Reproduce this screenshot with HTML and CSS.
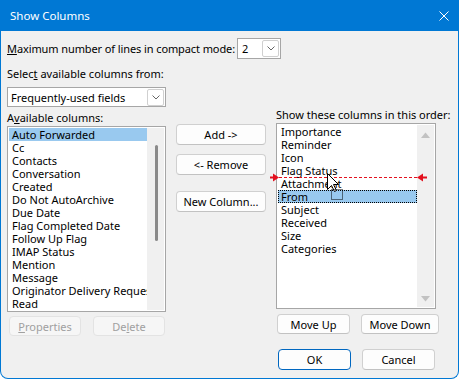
FILE: index.html
```html
<!DOCTYPE html>
<html>
<head>
<meta charset="utf-8">
<title>Show Columns</title>
<link rel="stylesheet" href="styles.css">
</head>
<body>
<div class="window">
  <div class="titlebar">
    <span class="title">Show Columns</span>
    <svg class="close" width="10" height="10" viewBox="0 0 10 10"><path d="M0.5 0.5 L9.5 9.5 M9.5 0.5 L0.5 9.5" stroke="#fff" stroke-width="1" fill="none"/></svg>
  </div>
  <div class="content">
    <div class="row-lines">
      <span class="lbl lbl-lines"><u>M</u>aximum number of lines in compact mode:</span>
      <div class="combo combo-small">
        <span class="combo-text">2</span>
        <span class="drop"><svg width="8" height="5" viewBox="0 0 8 5"><path d="M0.5 0.5 L4 4 L7.5 0.5" stroke="#666" stroke-width="1" fill="none"/></svg></span>
      </div>
    </div>
    <div class="lbl lbl-select">Selec<u>t</u> available columns from:</div>
    <div class="combo combo-wide">
      <span class="combo-text">Frequently-used fields</span>
      <span class="drop"><svg width="8" height="5" viewBox="0 0 8 5"><path d="M0.5 0.5 L4 4 L7.5 0.5" stroke="#666" stroke-width="1" fill="none"/></svg></span>
    </div>
    <div class="columns">
      <div class="col-left">
        <div class="lbl">A<u>v</u>ailable columns:</div>
        <div class="listbox">
          <ul class="items">
            <li class="sel">Auto Forwarded</li>
            <li>Cc</li>
            <li>Contacts</li>
            <li>Conversation</li>
            <li>Created</li>
            <li>Do Not AutoArchive</li>
            <li>Due Date</li>
            <li>Flag Completed Date</li>
            <li>Follow Up Flag</li>
            <li>IMAP Status</li>
            <li>Mention</li>
            <li>Message</li>
            <li>Originator Delivery Requested</li>
            <li>Read</li>
          </ul>
          <div class="vscroll"><div class="thumb"></div></div>
        </div>
        <div class="btn-row left-btns">
          <button class="btn btn-disabled btn-prop" disabled><u>P</u>roperties</button>
          <button class="btn btn-disabled btn-del" disabled>De<u>l</u>ete</button>
        </div>
      </div>
      <div class="col-mid">
        <button class="btn btn-mid">Add -&gt;</button>
        <button class="btn btn-mid btn-remove">&lt;- Remove</button>
        <button class="btn btn-mid btn-new">New Column...</button>
      </div>
      <div class="col-right">
        <div class="lbl">Show these columns in this order:</div>
        <div class="listbox listbox-right">
          <ul class="items">
            <li>Importance</li>
            <li>Reminder</li>
            <li>Icon</li>
            <li>Flag Status</li>
            <li>Attachment</li>
            <li class="sel focus">From</li>
            <li>Subject</li>
            <li>Received</li>
            <li>Size</li>
            <li>Categories</li>
          </ul>
          <div class="vscroll vscroll-arrows">
            <svg class="arr" width="9" height="6" viewBox="0 0 9 6"><path d="M0 6 L4.5 0.5 L9 6 Z" fill="#c2c2c2"/></svg>
            <svg class="arr" width="9" height="6" viewBox="0 0 9 6"><path d="M0 0 L4.5 5.5 L9 0 Z" fill="#c2c2c2"/></svg>
          </div>
          <svg class="drop-marker" width="160" height="9" viewBox="0 0 160 9">
            <path d="M1 4.5 H5" stroke="#e3101e" stroke-width="2"/>
            <path d="M4 0.5 L10 4.5 L4 8.5 Z" fill="#e3101e"/>
            <path d="M10 4.5 H148" stroke="#e3101e" stroke-width="1" stroke-dasharray="3 2"/>
            <path d="M154 0.5 L148 4.5 L154 8.5 Z" fill="#e3101e"/>
            <path d="M153 4.5 H158" stroke="#e3101e" stroke-width="2"/>
          </svg>
          <svg class="drag-cursor" width="20" height="30" viewBox="0 0 20 30">
            <path d="M1.5 1.5 L1.5 17.5 L5.5 13.5 L8.5 19.5 L10.5 18.5 L7.5 12.5 L12.5 12.5 Z" fill="#fff" stroke="#000" stroke-width="1"/>
            <rect x="5.5" y="17.5" width="11" height="10" fill="none" stroke="#000" stroke-width="1" stroke-dasharray="1 1"/>
          </svg>
        </div>
        <div class="btn-row right-btns">
          <button class="btn btn-up">Move Up</button>
          <button class="btn btn-down">Move Down</button>
        </div>
        <div class="btn-row dialog-btns">
          <button class="btn btn-ok">OK</button>
          <button class="btn btn-cancel">Cancel</button>
        </div>
      </div>
    </div>
  </div>
</div>
</body>
</html>
```

FILE: styles.css
```css
* { box-sizing: border-box; }
html, body { margin: 0; padding: 0; background: #ffffff; }
body {
  font-family: "Noto Sans", "Segoe UI", sans-serif;
  font-size: 11px;
  color: #000;
}
u { text-decoration: underline; text-underline-offset: 1px; }

.window {
  width: 459px;
  height: 379px;
  background: #f0f0f0;
  border: 1px solid #0078d4;
  border-top: none;
  border-radius: 0 0 8px 8px;
  overflow: hidden;
  display: flex;
  flex-direction: column;
}

.titlebar {
  height: 31px;
  flex: none;
  background: #0078d4;
  color: #fff;
  display: flex;
  align-items: center;
  justify-content: space-between;
  padding: 0 9px 0 9px;
}
.title { font-size: 11.5px; line-height: 15px; }
.close { display: block; }

.content {
  padding: 7px 0 0 6px;
}

.lbl { line-height: 15px; white-space: nowrap; }

.row-lines {
  display: flex;
  align-items: center;
  height: 21px;
}
.lbl-lines { width: 230px; letter-spacing: -0.1px; }

.combo {
  background: #fff;
  border: 1px solid #a6a6a6;
  display: flex;
  align-items: center;
  justify-content: space-between;
}
.combo-text { line-height: 15px; white-space: nowrap; }
.drop {
  width: 17px;
  height: 17px;
  border: 1px solid #d0d0d0;
  border-radius: 2px;
  background: #fff;
  display: flex;
  align-items: center;
  justify-content: center;
}
.drop svg { display: block; }

.combo-small {
  width: 44px;
  height: 21px;
  padding: 0 1px 0 4px;
}
.lbl-select { margin-top: 7px; }
.combo-wide {
  width: 159px;
  height: 20px;
  margin-top: 6px;
  padding: 0 1px 0 3px;
}

.columns {
  display: flex;
  align-items: flex-start;
}

.col-left { width: 159px; padding-top: 3px; }
.col-mid {
  width: 90px;
  margin-left: 10px;
  padding-top: 17px;
  display: flex;
  flex-direction: column;
}
.col-right { width: 163px; margin-left: 10px; }

.listbox {
  position: relative;
  margin-top: 1px;
  width: 159px;
  height: 186px;
  background: #fff;
  border: 1px solid #a6a6a6;
  padding: 1px;
  display: flex;
}
.listbox-right { width: 160px; }

.items {
  list-style: none;
  margin: 0;
  padding: 0;
  flex: 1;
  min-width: 0;
  overflow: hidden;
}
.items li {
  height: 13px;
  line-height: 13px;
  padding-left: 3px;
  white-space: nowrap;
}
.items li.sel { background: #99c9ef; }
.items li.focus { outline: 1px dotted #000; outline-offset: -1px; }

.vscroll {
  width: 17px;
  flex: none;
  background: #f0f0f0;
}
.thumb {
  width: 3px;
  height: 96px;
  margin: 17px 0 0 8px;
  background: #8a8a8a;
  border-radius: 2px;
}
.vscroll-arrows {
  display: flex;
  flex-direction: column;
  justify-content: space-between;
  align-items: center;
  padding: 7px 0 5px 0;
}
.arr { display: block; }

.drop-marker {
  position: absolute;
  left: -8px;
  top: 49px;
}
.drag-cursor {
  position: absolute;
  left: 49px;
  top: 48px;
}

.btn {
  font: inherit;
  color: #000;
  background: #fdfdfd;
  border: 1px solid #d0d0d0;
  border-bottom-color: #c2c2c2;
  border-radius: 4px;
  padding: 0;
  line-height: 15px;
  white-space: nowrap;
}
.btn-disabled {
  color: #a0a0a0;
  background: #f6f6f6;
  border-color: #e3e3e3;
}

.btn-row { display: flex; }
.left-btns { margin-top: 4px; padding-left: 2px; }
.btn-prop, .btn-del { width: 72px; height: 20px; }
.btn-del { margin-left: 12px; }

.btn-mid { width: 90px; height: 21px; }
.btn-remove { margin-top: 9px; }
.btn-new { margin-top: 16px; }

.right-btns { margin-top: 5px; padding-left: 1px; }
.btn-up { width: 73px; height: 20px; }
.btn-down { width: 78px; height: 20px; margin-left: 11px; }

.dialog-btns { margin-top: 15px; padding-left: 2px; }
.btn-ok { width: 73px; height: 21px; border: 1px solid #0067c0; }
.btn-cancel { width: 73px; height: 21px; margin-left: 11px; }
```
